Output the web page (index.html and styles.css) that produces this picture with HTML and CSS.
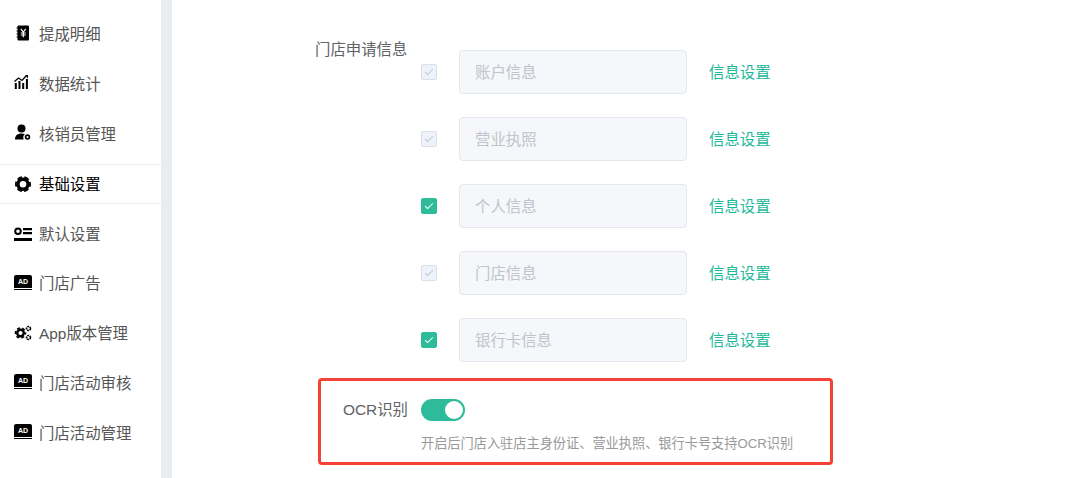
FILE: index.html
```html
<!DOCTYPE html>
<html lang="zh-CN">

<head>
    <meta charset="UTF-8">
    <meta name="viewport" content="width=device-width, initial-scale=1.0">
    <title>基础设置</title>
    <link rel="stylesheet" href="styles.css">
</head>

<body>
    <aside class="sidebar">
        <a class="menu-item" href="#">
            <svg class="menu-icon" viewBox="0 0 18 18">
                <rect x="3.500" y="1.500" width="11.500" height="15" rx="1"/>
                <path d="M2.500 4h2M2.500 7h2M2.500 10h2M2.500 13h2" stroke="#000" stroke-width="1.200"/>
                <path d="M6.800 4.800l2.500 3.200 2.500-3.200M9.300 8v5.200M6.800 9h5M6.800 11h5" fill="none" stroke="#fff" stroke-width="1.200"/>
            </svg>
            提成明细
        </a>
        <a class="menu-item" href="#">
            <svg class="menu-icon" viewBox="0 0 18 18">
                <path d="M.5 7.500l4-3.500 3.500 2.500L12 2" fill="none" stroke="#000" stroke-width="1.300"/>
                <path d="M11 1h3v3.500z"/>
                <path d="M.8 9h2v6h-2zM4.500 7h2v8h-2zM8.200 9h2v6h-2zM11.900 5h2v10h-2z"/>
            </svg>
            数据统计
        </a>
        <a class="menu-item" href="#">
            <svg class="menu-icon" viewBox="0 0 18 18">
                <circle cx="7.500" cy="4.500" r="4"/>
                <path d="M1 15.500c0-4 2.500-6 6.500-6 1.500 0 2.600.3 3.500.8-1.600.8-2.300 3-1.300 5.200z"/>
                <circle cx="13.500" cy="13" r="1.900" fill="none" stroke="#000" stroke-width="1.700"/>
            </svg>
            核销员管理
        </a>
        <a class="menu-item active" href="#">
            <svg class="menu-icon" viewBox="0 0 18 18">
                <circle cx="9" cy="10.200" r="5" fill="none" stroke="#000" stroke-width="3.400"/>
                <circle cx="9" cy="10.200" r="7.100" fill="none" stroke="#000" stroke-width="1.800" stroke-dasharray="5 2.430" stroke-dashoffset="2.500"/>
            </svg>
            基础设置
        </a>
        <a class="menu-item" href="#">
            <svg class="menu-icon" viewBox="0 0 18 18">
                <circle cx="4" cy="7.300" r="2.800" fill="none" stroke="#000" stroke-width="2"/>
                <path d="M9 4h9v2.200H9zM9 8h9v2.200H9zM0 14h18v3H0z"/>
            </svg>
            默认设置
        </a>
        <a class="menu-item" href="#">
            <span class="ad-icon">AD</span>
            门店广告
        </a>
        <a class="menu-item" href="#">
            <svg class="menu-icon" viewBox="0 0 18 18">
                <circle cx="6.500" cy="10" r="3.300" fill="none" stroke="#000" stroke-width="2.400"/>
                <circle cx="6.500" cy="10" r="5" fill="none" stroke="#000" stroke-width="1.600" stroke-dasharray="3 2.240" stroke-dashoffset="1.500"/>
                <circle cx="14.500" cy="5.500" r="2" fill="none" stroke="#000" stroke-width="1.600" stroke-dasharray="1.800 .6"/>
                <circle cx="14.500" cy="14.500" r="2" fill="none" stroke="#000" stroke-width="1.600" stroke-dasharray="1.800 .6"/>
            </svg>
            App版本管理
        </a>
        <a class="menu-item" href="#">
            <span class="ad-icon">AD</span>
            门店活动审核
        </a>
        <a class="menu-item" href="#">
            <span class="ad-icon">AD</span>
            门店活动管理
        </a>
    </aside>

    <main class="content">
        <div class="form-item">
            <label class="form-label">门店申请信息</label>
            <div class="info-rows">
                <div class="info-row">
                    <span class="checkbox disabled"></span>
                    <input class="info-input" type="text" placeholder="账户信息" disabled>
                    <a class="info-link" href="#">信息设置</a>
                </div>
                <div class="info-row">
                    <span class="checkbox disabled"></span>
                    <input class="info-input" type="text" placeholder="营业执照" disabled>
                    <a class="info-link" href="#">信息设置</a>
                </div>
                <div class="info-row">
                    <span class="checkbox"></span>
                    <input class="info-input" type="text" placeholder="个人信息" disabled>
                    <a class="info-link" href="#">信息设置</a>
                </div>
                <div class="info-row">
                    <span class="checkbox disabled"></span>
                    <input class="info-input" type="text" placeholder="门店信息" disabled>
                    <a class="info-link" href="#">信息设置</a>
                </div>
                <div class="info-row">
                    <span class="checkbox"></span>
                    <input class="info-input" type="text" placeholder="银行卡信息" disabled>
                    <a class="info-link" href="#">信息设置</a>
                </div>
            </div>
        </div>

        <div class="ocr-box">
            <div class="ocr-row">
                <label class="ocr-label">OCR识别</label>
                <span class="switch"></span>
            </div>
            <p class="ocr-help">开启后门店入驻店主身份证、营业执照、银行卡号支持OCR识别</p>
        </div>
    </main>
</body>

</html>
```

FILE: styles.css
```css
html,
body {
    height: 478px;
    overflow: hidden;
}

body {
    margin: 0;
    display: flex;
    font-family: "Liberation Sans", "Noto Sans CJK SC", sans-serif;
    font-size: 15.4px;
    background-color: #fff;
}

.sidebar {
    width: 161px;
    flex-shrink: 0;
    padding-top: 14.4px;
    display: flex;
    flex-direction: column;
    gap: 9.8px;
    box-sizing: border-box;
}

.menu-item {
    height: 40px;
    flex-shrink: 0;
    box-sizing: border-box;
    padding: 0 0 2px 14px;
    display: flex;
    align-items: center;
    gap: 7px;
    color: #555;
    text-decoration: none;
}

.menu-item.active {
    color: #000;
    border-top: 1px solid #ebedf2;
    border-bottom: 1px solid #ebedf2;
}

.menu-icon {
    width: 18px;
    height: 18px;
    flex-shrink: 0;
}

.ad-icon {
    width: 18px;
    height: 15px;
    flex-shrink: 0;
    box-sizing: border-box;
    padding-bottom: 1px;
    border-bottom: 1px solid #000;
    border-radius: 2px 2px 0 0;
    background-color: #000;
    background-clip: content-box;
    color: #fff;
    font-size: 7px;
    font-weight: bold;
    line-height: 13px;
    text-align: center;
}

.content {
    flex: 1;
    border-left: 11px solid #e9ecf1;
    padding-left: 143px;
    padding-top: 39px;
}

.form-item {
    display: flex;
}

.form-label {
    width: 106px;
    flex-shrink: 0;
    padding-top: 1px;
    line-height: 20px;
    color: #606266;
}

.info-rows {
    padding-top: 11px;
    display: flex;
    flex-direction: column;
    gap: 23px;
}

.info-row {
    height: 44px;
    display: flex;
    align-items: center;
}

.checkbox {
    width: 16px;
    height: 16px;
    box-sizing: border-box;
    margin: -1px 22px 0 0;
    border-radius: 2px;
    background-color: #2dbb9a;
    border: 1px solid #2dbb9a;
    display: flex;
    align-items: center;
    justify-content: center;
}

.checkbox::after {
    content: "";
    width: 3px;
    height: 7px;
    margin-top: -2px;
    border-right: 1px solid #fff;
    border-bottom: 1px solid #fff;
    transform: rotate(45deg);
}

.checkbox.disabled {
    background-color: #edf2fc;
    border-color: #dcdfe6;
}

.checkbox.disabled::after {
    border-color: #c0c4cc;
}

.info-input {
    width: 228px;
    height: 44px;
    box-sizing: border-box;
    padding: 2px 15px 0;
    border: 1px solid #e4e7ed;
    border-radius: 4px;
    background-color: #f5f7fa;
    font-family: inherit;
    font-size: 15.4px;
}

.info-input::placeholder {
    color: #c0c4cc;
}

.info-link {
    margin-left: 22px;
    padding-bottom: 2px;
    color: #1db99a;
    text-decoration: none;
}

.ocr-box {
    width: 515px;
    height: 87px;
    box-sizing: border-box;
    margin: 16px 0 0 3px;
    padding: 18px 0 0 22px;
    border: 3px solid #f44336;
    border-radius: 4px;
}

.ocr-row {
    display: flex;
    align-items: center;
    gap: 14px;
    height: 22px;
}

.ocr-label {
    width: 64px;
    padding-bottom: 4px;
    color: #606266;
    white-space: nowrap;
}

.switch {
    width: 44px;
    height: 22px;
    box-sizing: border-box;
    padding: 2px;
    border-radius: 11px;
    background-color: #2dbb9a;
    display: flex;
    justify-content: flex-end;
}

.switch::after {
    content: "";
    width: 18px;
    height: 18px;
    border-radius: 50%;
    background-color: #fff;
}

.ocr-help {
    margin: 14px 0 0 78px;
    font-size: 13.2px;
    line-height: 18px;
    color: #999;
}
```
